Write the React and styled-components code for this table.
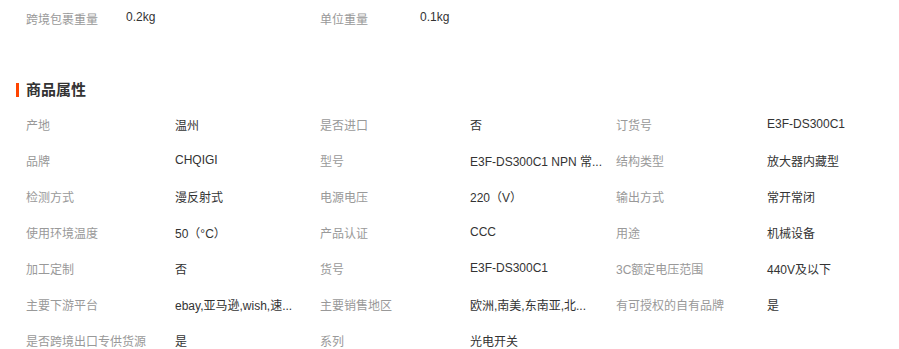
import React from 'react';
import styled, { createGlobalStyle } from 'styled-components';

const GlobalStyle = createGlobalStyle`
    body {
        margin: 0;
        background: #fff;
        font-family: "Liberation Sans", "Noto Sans CJK SC", sans-serif;
        font-size: 12px;
    }
`;

const basics = [
    { label: '跨境包裹重量', value: '0.2kg' },
    { label: '单位重量', value: '0.1kg' }
];

// long values are shown already cut, as the page shows them
const attrs = [
    ['产地', '温州'],
    ['是否进口', '否'],
    ['订货号', 'E3F-DS300C1'],
    ['品牌', 'CHQIGI'],
    ['型号', 'E3F-DS300C1 NPN 常...'],
    ['结构类型', '放大器内藏型'],
    ['检测方式', '漫反射式'],
    ['电源电压', '220（V）'],
    ['输出方式', '常开常闭'],
    ['使用环境温度', '50（°C）'],
    ['产品认证', 'CCC'],
    ['用途', '机械设备'],
    ['加工定制', '否'],
    ['货号', 'E3F-DS300C1'],
    ['3C额定电压范围', '440V及以下'],
    ['主要下游平台', 'ebay,亚马逊,wish,速...'],
    ['主要销售地区', '欧洲,南美,东南亚,北...'],
    ['有可授权的自有品牌', '是'],
    ['是否跨境出口专供货源', '是'],
    ['系列', '光电开关']
];

const App = () => (
    <Page>
        <GlobalStyle />
        <BasicRow>
            {basics.map(b => (
                <BasicItem key={b.label}>
                    <BasicLabel>{b.label}</BasicLabel>
                    <Value>{b.value}</Value>
                </BasicItem>
            ))}
        </BasicRow>
        <Title>商品属性</Title>
        <AttrGrid>
            {attrs.map(([label, value]) => (
                <React.Fragment key={label}>
                    <Label>{label}</Label>
                    <Value>{value}</Value>
                </React.Fragment>
            ))}
        </AttrGrid>
    </Page>
);

export default App;

const Page = styled.div`
    width: 899px;
    padding-left: 26px;
    box-sizing: border-box;
`;

const BasicRow = styled.div`
    display: flex;
    height: 36px;
    align-items: center;
`;

const BasicItem = styled.div`
    display: flex;
    width: 294px;
`;

const BasicLabel = styled.span`
    width: 100px;
    color: #999;
    white-space: nowrap;
`;

const Title = styled.h3`
    position: relative;
    margin: 36px 0 0;
    height: 35px;
    line-height: 35px;
    font-size: 15px;
    font-weight: bold;
    color: #333;

    &:before {
        content: '';
        position: absolute;
        left: -10px;
        top: 11px;
        width: 3px;
        height: 14px;
        background: #ff4400;
    }
`;

const AttrGrid = styled.div`
    display: grid;
    grid-template-columns: 149px 145px 150px 146px 151px 130px;
    grid-auto-rows: 36px;
    align-items: center;
    margin-top: -1px;
`;

const Label = styled.div`
    color: #999;
    white-space: nowrap;
`;

const Value = styled.div`
    color: #333;
    white-space: nowrap;
`;
